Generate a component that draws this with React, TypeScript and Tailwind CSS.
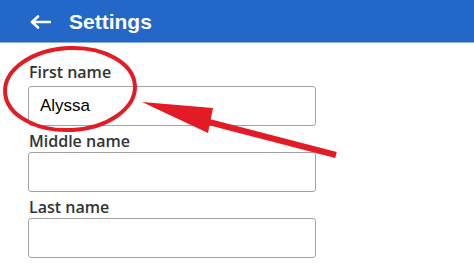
export default function App() {
  return (
    <div className="relative w-[474px] h-[266px] overflow-hidden bg-white">
      <header className="h-[43px] bg-[#2367c9] border-b border-[#86aee6] flex items-center pl-[30px] pt-[2px]">
        <svg width="21" height="14" viewBox="0 0 21 14" className="mr-[18px]">
          <path d="M20 7H2M8 1.5L2 7l6 5.5" fill="none" stroke="white" strokeWidth="2.6" strokeLinecap="round" strokeLinejoin="round" />
        </svg>
        <h1 className="text-white font-bold text-[21px] font-['Liberation_Sans',Arial,sans-serif]">Settings</h1>
      </header>

      <div className="pl-[28px] pt-[19px] font-['Open_Sans',sans-serif]">
        <label className="block text-[16px] leading-[20px] font-semibold text-[#333] mb-[4px] pl-[1px]">First name</label>
        <input
          readOnly
          value="Alyssa"
          className="block w-[288px] h-[40px] border border-[#a3a3a3] rounded-[3px] px-[11px] text-[17px] text-black font-['Liberation_Sans',Arial,sans-serif] outline-none"
        />

        <label className="block text-[16px] leading-[20px] font-semibold text-[#333] mt-[5px] mb-[1px] pl-[1px]">Middle name</label>
        <input readOnly value="" className="block w-[288px] h-[40px] border border-[#a3a3a3] rounded-[3px] outline-none" />

        <label className="block text-[16px] leading-[20px] font-semibold text-[#333] mt-[5px] mb-[1px] pl-[1px]">Last name</label>
        <input readOnly value="" className="block w-[288px] h-[40px] border border-[#a3a3a3] rounded-[3px] outline-none" />
      </div>

      {/* annotation overlay */}
      <svg className="absolute inset-0 pointer-events-none" width="474" height="266" viewBox="0 0 474 266">
        <ellipse cx="70" cy="89" rx="65" ry="41" fill="none" stroke="#e31b24" strokeWidth="4" transform="rotate(-3 70 89)" />
        <polygon points="142,102 213,108 208,133" fill="#e31b24" />
        <line x1="205" y1="121" x2="336" y2="155" stroke="#e31b24" strokeWidth="6" />
      </svg>
    </div>
  );
}
